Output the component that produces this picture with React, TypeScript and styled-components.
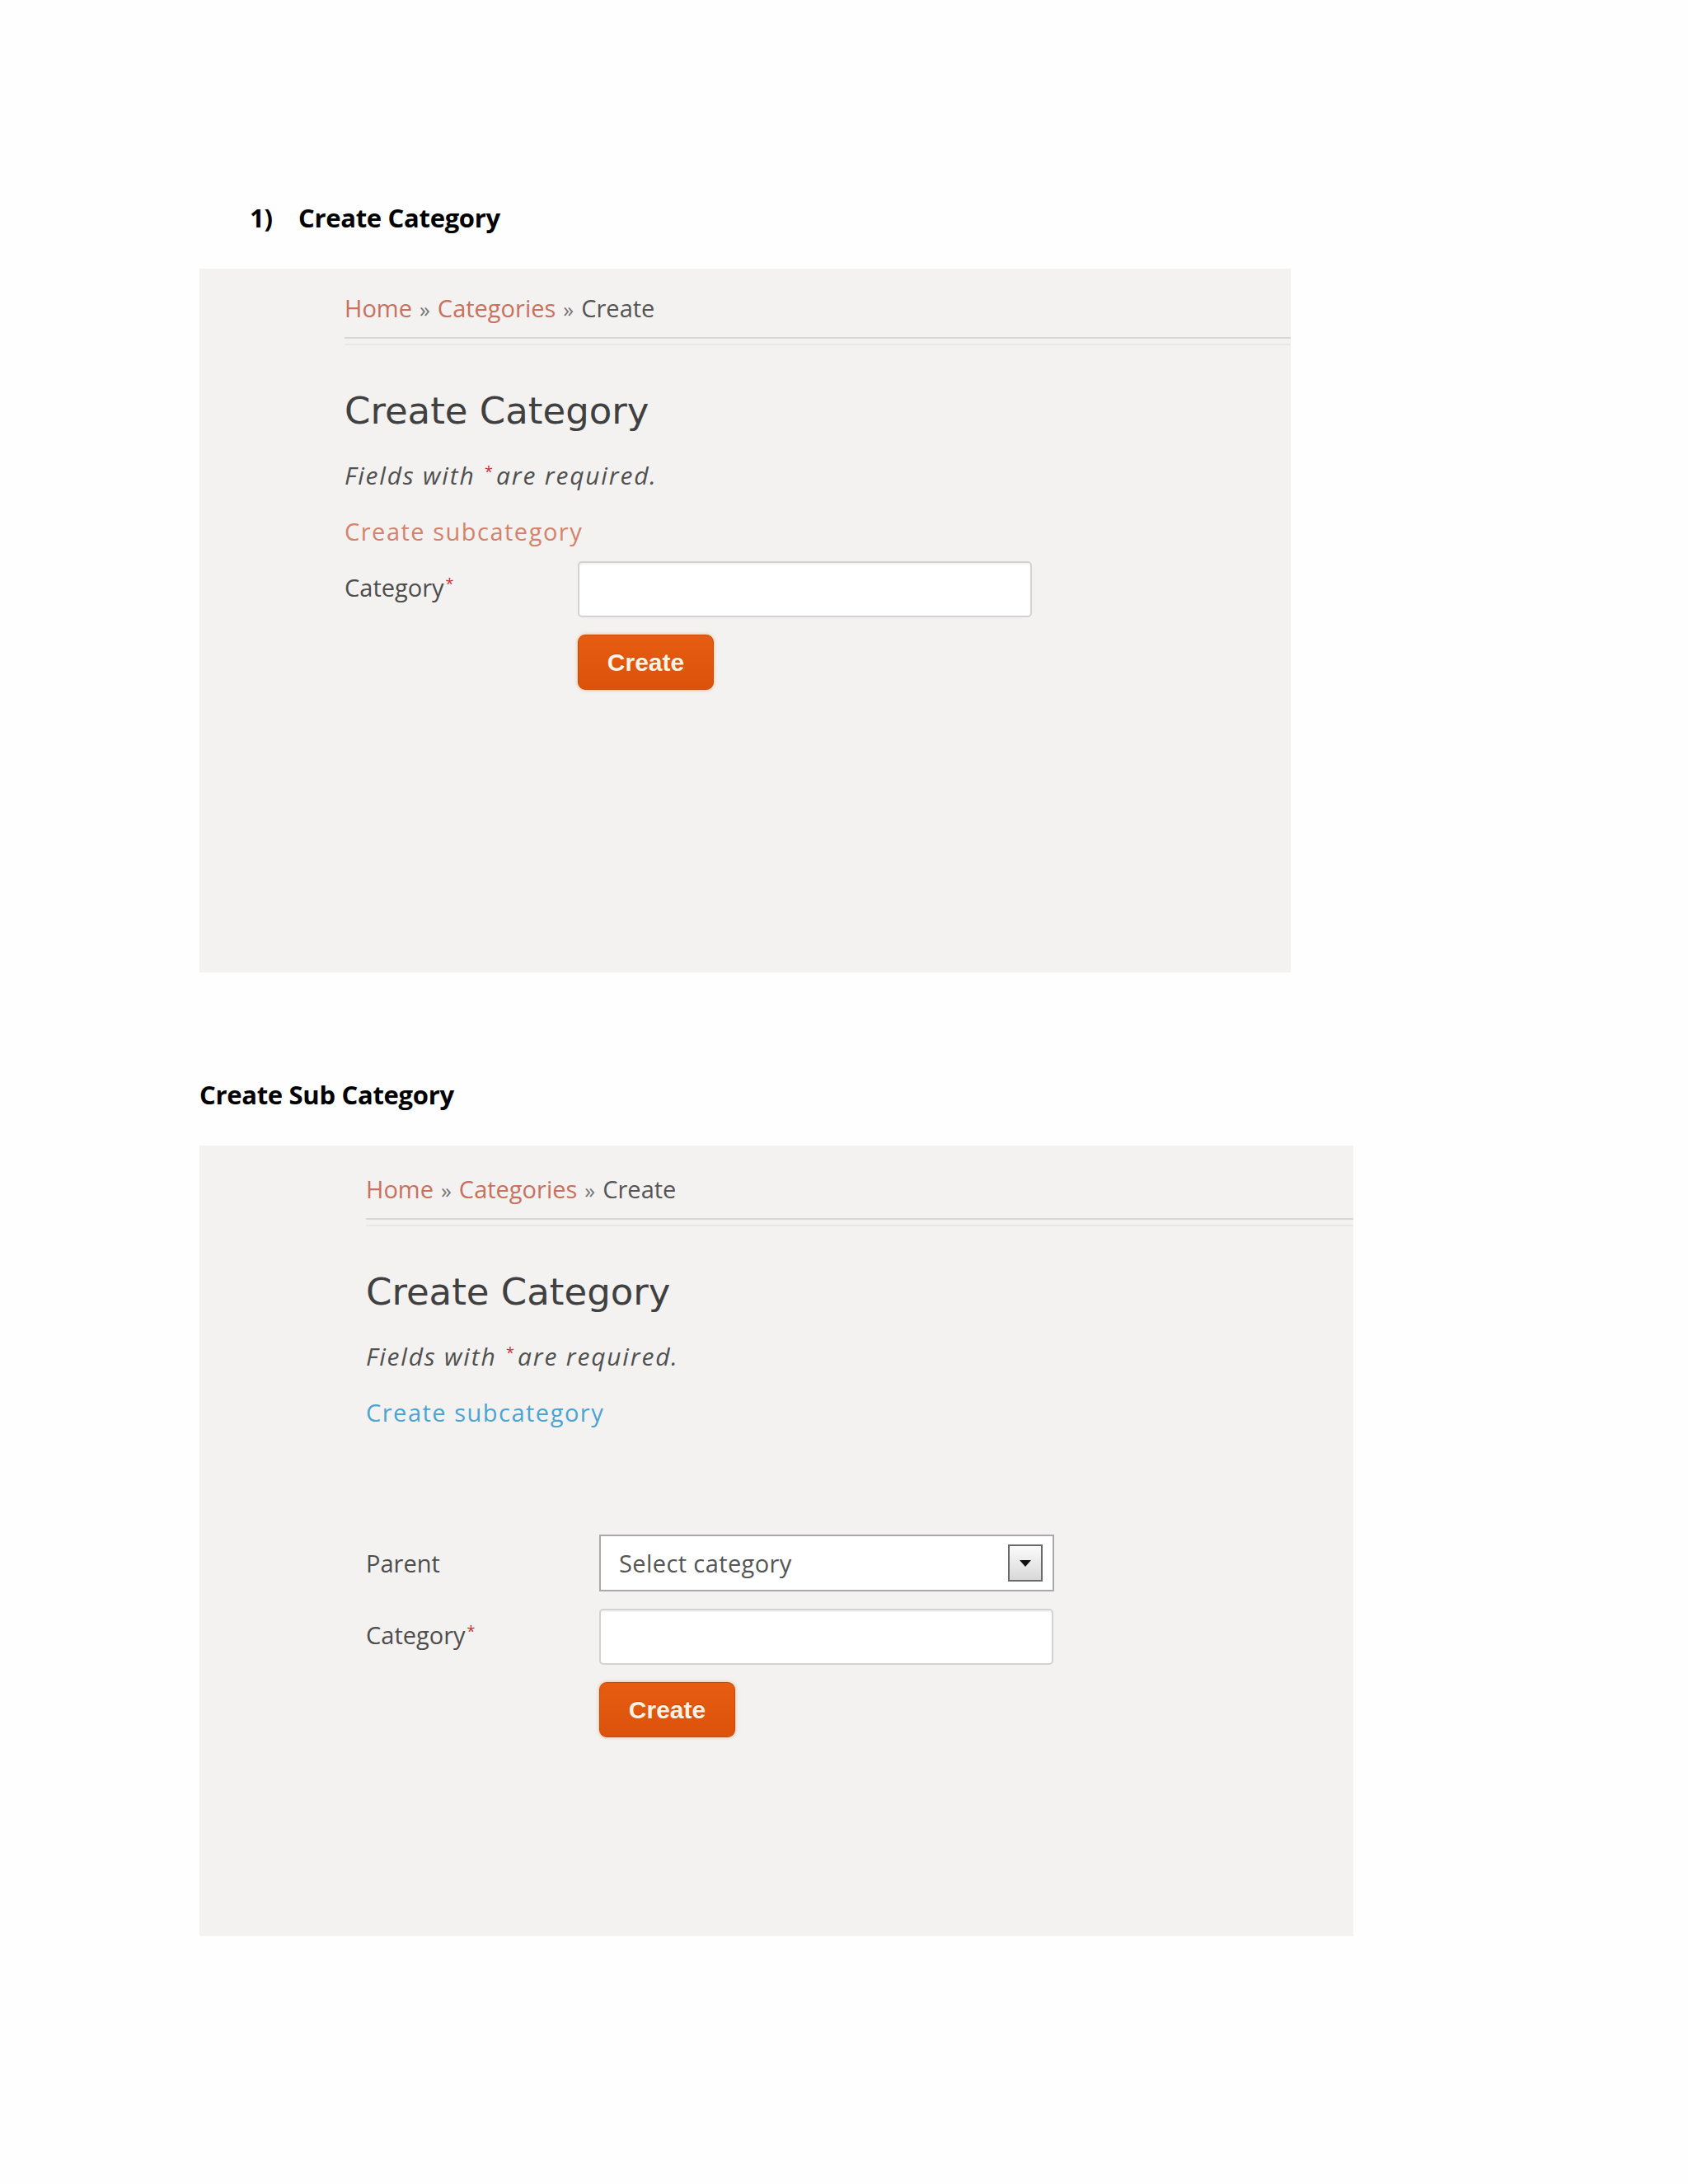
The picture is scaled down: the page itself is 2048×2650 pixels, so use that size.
import React from "react";
import styled, { createGlobalStyle } from "styled-components";

type Tone = "warm" | "cool";

interface SectionProps {
  number?: string;
  title: string;
  width: number;
  height: number;
  inset: number;
  top: number;
  tone: Tone;
  formGap: number;
  withParent?: boolean;
}

function Section({
  number,
  title,
  width,
  height,
  inset,
  top,
  tone,
  formGap,
  withParent,
}: SectionProps) {
  return (
    <StyledSection>
      <StyledTitle $indent={number ? 61 : 0}>
        {number && <span className="marker">{number}</span>}
        <span>{title}</span>
      </StyledTitle>
      <StyledPanel $width={width} $height={height} $inset={inset} $top={top}>
        <StyledBreadcrumb>
          <a href="#home">Home</a>
          <span className="sep">»</span>
          <a href="#categories">Categories</a>
          <span className="sep">»</span>
          <span>Create</span>
        </StyledBreadcrumb>
        <StyledHeading>Create Category</StyledHeading>
        <StyledHint>
          Fields with <StyledReq>*</StyledReq>are required.
        </StyledHint>
        <StyledSubLink href="#sub" $tone={tone}>
          Create subcategory
        </StyledSubLink>
        <StyledForm $offset={formGap} onSubmit={(e) => e.preventDefault()}>
          {withParent && (
            <StyledRow>
              <StyledLabel>Parent</StyledLabel>
              <StyledSelect>
                <span>Select category</span>
                <span className="arrowBtn">
                  <svg width="16" height="10" viewBox="0 0 16 10">
                    <path d="M1 1 L15 1 L8 9 Z" fill="#111" />
                  </svg>
                </span>
              </StyledSelect>
            </StyledRow>
          )}
          <StyledRow>
            <StyledLabel>
              Category<StyledReq>*</StyledReq>
            </StyledLabel>
            <StyledInput type="text" />
          </StyledRow>
          <StyledActions>
            <StyledButton type="submit">Create</StyledButton>
          </StyledActions>
        </StyledForm>
      </StyledPanel>
    </StyledSection>
  );
}

export default function App() {
  return (
    <>
      <GlobalStyle />
      <StyledPage>
        <Section
          number="1)"
          title="Create Category"
          width={1324}
          height={854}
          inset={176}
          top={28}
          tone="warm"
          formGap={16}
        />
        <Section
          title="Create Sub Category"
          width={1400}
          height={959}
          inset={202}
          top={33}
          tone="cool"
          formGap={128}
          withParent
        />
      </StyledPage>
    </>
  );
}

const GlobalStyle = createGlobalStyle`
  html, body {
    margin: 0;
    padding: 0;
    background: #fefefe;
  }
  body {
    font-family: "Open Sans", "Noto Sans", sans-serif;
  }
`;

const StyledPage = styled.main`
  width: 2048px;
  min-height: 2650px;
  box-sizing: border-box;
  padding: 242px 0 0 242px;
`;

const StyledSection = styled.section`
  margin-bottom: 126px;
`;

const StyledTitle = styled.h2<{ $indent: number }>`
  display: flex;
  margin: 0 0 40px;
  padding-left: ${(p) => p.$indent}px;
  font-family: "Open Sans", sans-serif;
  font-size: 31px;
  line-height: 44px;
  font-weight: 700;
  letter-spacing: -0.3px;
  color: #000;

  .marker {
    width: 59px;
    flex: none;
  }
`;

const StyledPanel = styled.div<{
  $width: number;
  $height: number;
  $inset: number;
  $top: number;
}>`
  width: ${(p) => p.$width}px;
  height: ${(p) => p.$height}px;
  box-sizing: border-box;
  padding: ${(p) => p.$top}px 0 0 ${(p) => p.$inset}px;
  background: #f3f2f0;
`;

const StyledBreadcrumb = styled.nav`
  position: relative;
  padding-bottom: 14px;
  border-bottom: 2px solid #d7d7d6;
  font-size: 29px;
  line-height: 40px;
  color: #555;

  a {
    color: #c9705e;
    text-decoration: none;
  }

  .sep {
    margin: 0 9px;
    font-size: 26px;
    color: #777;
  }

  &::after {
    content: "";
    position: absolute;
    left: 0;
    right: 0;
    bottom: -10px;
    height: 2px;
    background: #e9e8e6;
  }
`;

const StyledHeading = styled.h1`
  margin: 62px 0 0;
  font-family: "DejaVu Sans", "Open Sans", sans-serif;
  font-size: 45px;
  line-height: 52px;
  font-weight: normal;
  color: #404040;
`;

const StyledHint = styled.p`
  margin: 32px 0 0;
  font-size: 30px;
  line-height: 40px;
  font-style: italic;
  letter-spacing: 1.8px;
  color: #505050;
`;

const StyledReq = styled.span`
  position: relative;
  top: -9px;
  margin: 0 4px 0 2px;
  font-size: 18px;
  font-style: normal;
  letter-spacing: 0;
  color: #c4313a;
`;

const StyledSubLink = styled.a<{ $tone: Tone }>`
  display: block;
  width: max-content;
  margin-top: 24px;
  font-size: 29px;
  line-height: 40px;
  letter-spacing: 1.5px;
  text-decoration: none;
  color: ${(p) => (p.$tone === "warm" ? "#d3826c" : "#4ba4d2")};
`;

const StyledForm = styled.form<{ $offset: number }>`
  display: flex;
  flex-direction: column;
  gap: 21px;
  margin-top: ${(p) => p.$offset}px;
`;

const StyledRow = styled.div`
  display: flex;
  align-items: center;
`;

const StyledLabel = styled.label`
  width: 283px;
  flex: none;
  font-size: 29px;
  line-height: 40px;
  color: #4d4d4d;
`;

const StyledInput = styled.input`
  width: 551px;
  height: 68px;
  box-sizing: border-box;
  padding: 0 16px;
  border: 2px solid #d2d2d2;
  border-radius: 5px;
  background: #fff;
  box-shadow: inset 0 2px 2px rgba(0, 0, 0, 0.05);
  font: 29px "Open Sans", sans-serif;
  outline: none;
`;

const StyledSelect = styled.div`
  width: 552px;
  height: 69px;
  box-sizing: border-box;
  display: flex;
  align-items: center;
  justify-content: space-between;
  padding: 0 12px 0 22px;
  border: 2px solid #a9a9a9;
  background: #fff;
  font-size: 29px;
  letter-spacing: 0.4px;
  color: #555;

  .arrowBtn {
    width: 42px;
    height: 45px;
    box-sizing: border-box;
    display: flex;
    align-items: center;
    justify-content: center;
    border: 2px solid #6a6a6a;
    background: linear-gradient(#fbfbfb, #d8d8d8);
  }
`;

const StyledActions = styled.div`
  padding-left: 283px;
`;

const StyledButton = styled.button`
  width: 165px;
  height: 67px;
  border: 1px solid #c84a09;
  border-radius: 9px;
  background: linear-gradient(#e65c10, #dc520c);
  box-shadow: 0 0 4px rgba(240, 140, 60, 0.6);
  font-family: "Liberation Sans", Arial, sans-serif;
  font-size: 30px;
  font-weight: 700;
  color: #fff2e2;
  text-shadow: 0 -1px 0 rgba(150, 50, 0, 0.4);
  cursor: pointer;
`;
